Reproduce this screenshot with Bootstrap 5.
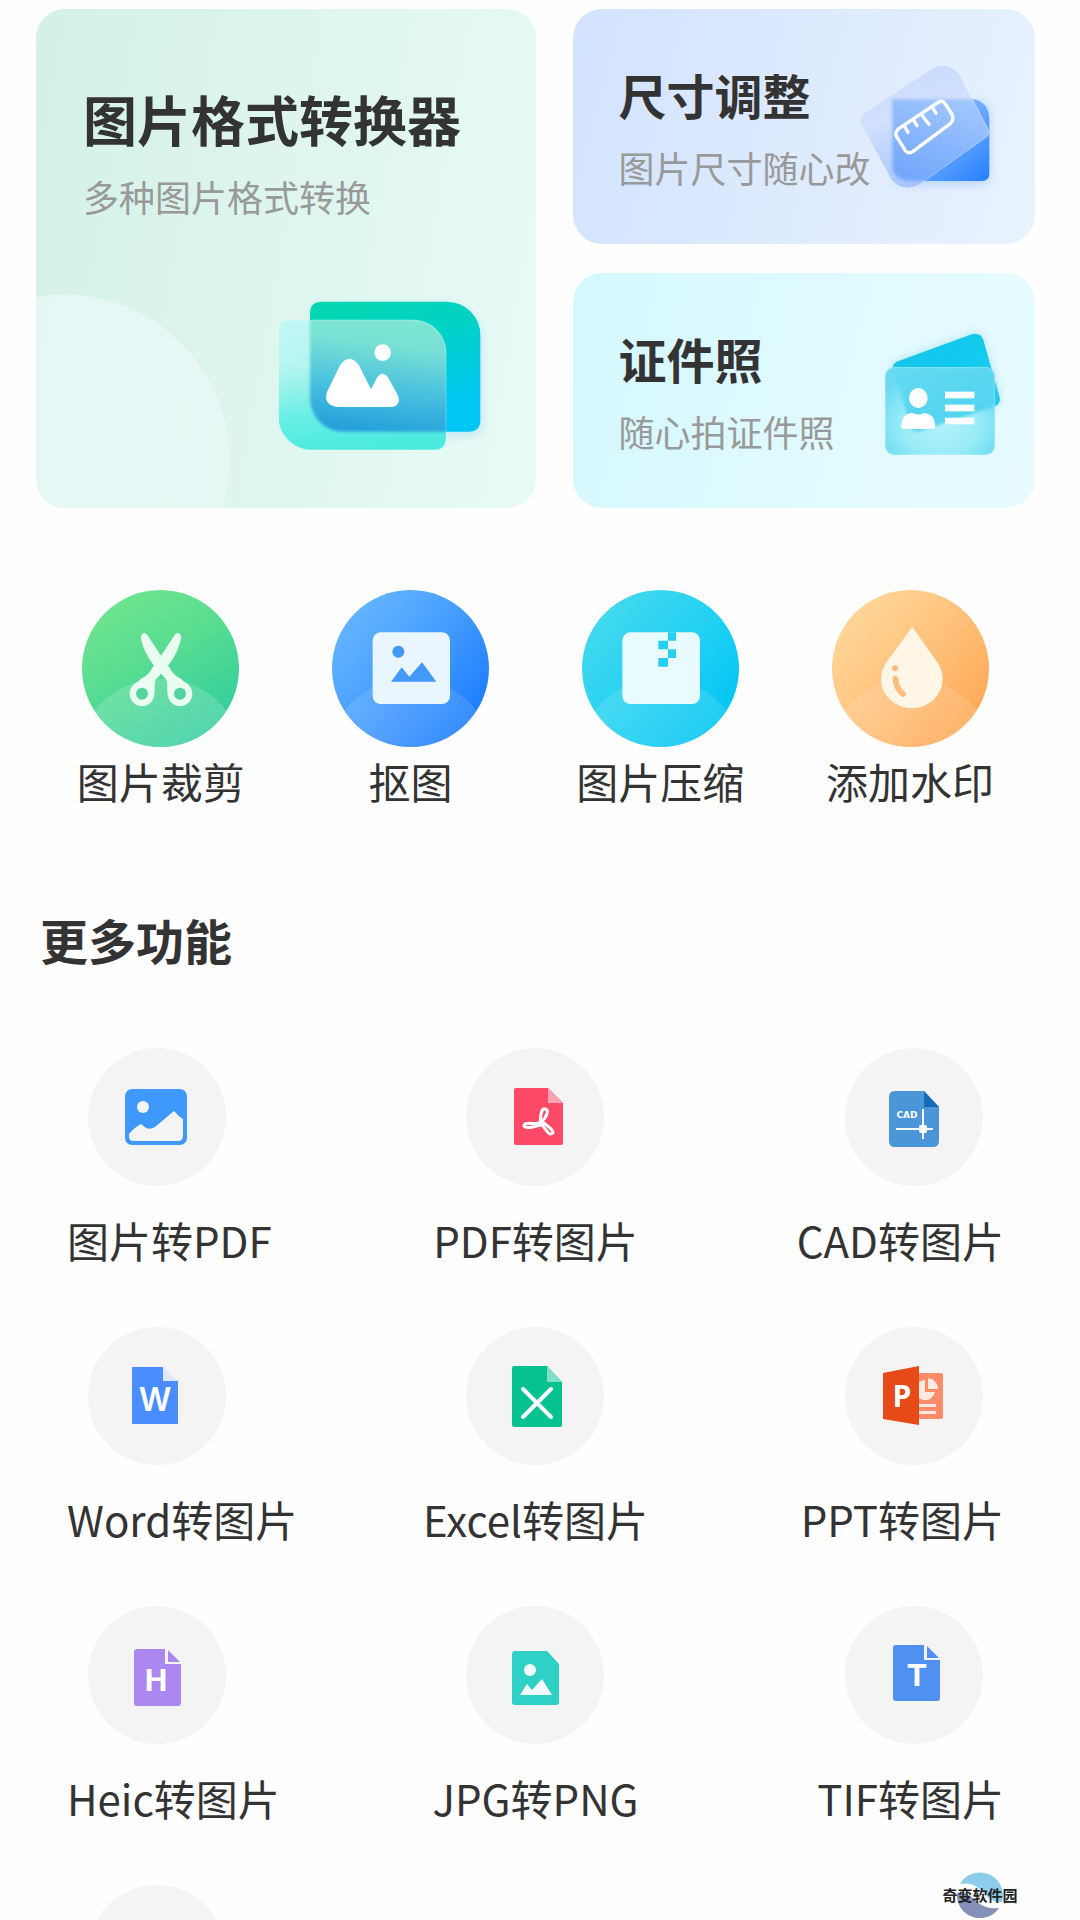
<!DOCTYPE html>
<html lang="zh-CN">
<head>
<meta charset="utf-8">
<meta name="viewport" content="width=device-width, initial-scale=1">
<title>图片格式转换器</title>
<link href="https://cdn.jsdelivr.net/npm/bootstrap@5.3.0/dist/css/bootstrap.min.css" rel="stylesheet">
<style>
  body { background: #fefefe; color: #333; font-family: "Noto Sans CJK SC", sans-serif; }
  a { color: inherit; text-decoration: none; }
  svg { display: block; flex-shrink: 0; }
  .screen { padding: 9px 45px 0 36px; }
  .features { gap: 37px; }
  .feature-stack { gap: 29px; flex: 1 1 0; min-width: 0; }
  .feature { border-radius: 29px; overflow: hidden; }
  .feature-main {
    flex: 0 0 50%;
    padding: 76px 25px 38px 47px;
    background:
      radial-gradient(circle 166px at 28px calc(100% - 48px), rgba(232,248,246,.85) 165px, rgba(232,248,246,0) 166px),
      linear-gradient(100deg, #d4f1e7 0%, #def6ee 50%, #e7fbf6 100%);
  }
  .feature-side { min-height: 235px; padding: 0 15px 0 46px; }
  .feature-size { background: linear-gradient(105deg, #d2e3ff, #dfebfe 55%, #e9f3ff); }
  .feature-id { background: linear-gradient(105deg, #d4f8fd, #e0faff 55%, #e7fbff); }
  .feature-copy { gap: 21px; min-width: 0; }
  .title-lg { font-size: 54px; line-height: 68px; font-weight: 700; }
  .title-md { font-size: 48px; line-height: 60px; font-weight: 700; }
  .hint { font-size: 36px; line-height: 44px; color: #999; }
  .caption { font-size: 42px; line-height: 48px; }
  .tools { margin-top: 82px; }
  .tool { gap: 10px; }
  .section-title { margin: 104px 0 79px 4px; }
  .converters { padding: 0 31px; row-gap: 63px; }
  .converter { gap: 30px; }
  .disc { width: 138px; height: 138px; margin: 0 21px; border-radius: 50%; background: #f4f4f4; }
  .source-mark { right: 60px; bottom: 2px; width: 80px; height: 46px; }
  .source-name { font-size: 15px; line-height: 20px; font-weight: 700; color: #222; }
</style>
<script src="https://cdn.jsdelivr.net/npm/bootstrap@5.3.0/dist/js/bootstrap.bundle.min.js"></script>
</head>
<body>
<main class="screen vh-100 overflow-hidden position-relative">

  <section class="features d-flex">
    <a href="#" class="feature feature-main d-flex flex-column justify-content-between">
      <div class="feature-copy d-flex flex-column text-nowrap">
        <h1 class="title-lg m-0">图片格式转换器</h1>
        <p class="hint m-0">多种图片格式转换</p>
      </div>
      <svg class="align-self-end" width="260" height="190" viewBox="0 0 780 570" aria-hidden="true">
        <defs>
          <linearGradient id="cBack" x1="0" y1="0" x2=".35" y2="1"><stop offset="0" stop-color="#04d8ae"/><stop offset=".45" stop-color="#02d1c8"/><stop offset="1" stop-color="#00c6f6"/></linearGradient>
          <linearGradient id="cFront" x1=".1" y1="0" x2=".25" y2="1"><stop offset="0" stop-color="#c0f7f4"/><stop offset=".35" stop-color="#b6f5ef"/><stop offset=".75" stop-color="#66eee4"/><stop offset="1" stop-color="#4deae0"/></linearGradient>
          <linearGradient id="cMix" x1=".6" y1="0" x2=".45" y2="1"><stop offset="0" stop-color="#80e9d0"/><stop offset=".35" stop-color="#78e0d4"/><stop offset=".7" stop-color="#47bfdf"/><stop offset="1" stop-color="#26a0dc"/></linearGradient>
          <clipPath id="cClip"><path d="M117 120H485A100 100 0 0 1 585 220V475Q585 510 550 510H182A100 100 0 0 1 82 410V155Q82 120 117 120Z"/></clipPath>
          <filter id="blur5" x="-20%" y="-20%" width="140%" height="140%"><feGaussianBlur stdDeviation="5"/></filter>
          <filter id="blur14" x="-20%" y="-20%" width="140%" height="140%"><feGaussianBlur stdDeviation="14"/></filter>
        </defs>
        <path d="M212 65H588A100 100 0 0 1 688 165V420Q688 455 653 455H277A100 100 0 0 1 177 355V100Q177 65 212 65Z" fill="#8fc9f5" opacity=".4" filter="url(#blur14)" transform="translate(4 12)"/>
        <path d="M212 65H588A100 100 0 0 1 688 165V420Q688 455 653 455H277A100 100 0 0 1 177 355V100Q177 65 212 65Z" fill="url(#cBack)"/>
        <g clip-path="url(#cClip)">
          <path d="M82 120H585V510H82Z" fill="url(#cFront)"/>
          <path d="M177 65H688V455H277A100 100 0 0 1 177 355Z" fill="url(#cMix)" filter="url(#blur5)"/>
        </g>
        <path d="M117 120H485A100 100 0 0 1 585 220V475Q585 510 550 510H182A100 100 0 0 1 82 410V155Q82 120 117 120Z" fill="none" stroke="#fff" stroke-opacity=".22" stroke-width="4"/>
        <g fill="#fff"><circle cx="395" cy="218" r="25"/>
        <path d="M268 254Q295 218 323 254L360 328L378 293Q395 270 412 293L440 345Q452 372 425 381H258Q216 374 228 336Z"/></g>
      </svg>
    </a>

    <div class="feature-stack d-flex flex-column">
      <a href="#" class="feature feature-side feature-size d-flex align-items-center">
        <div class="feature-copy d-flex flex-column flex-fill text-nowrap">
          <h2 class="title-md m-0">尺寸调整</h2>
          <p class="hint m-0">图片尺寸随心改</p>
        </div>
        <svg width="165" height="153" viewBox="45 0 495 459" aria-hidden="true">
          <defs>
            <linearGradient id="sBack" x1="0" y1="0" x2="1" y2="1"><stop offset="0" stop-color="#9cc4ff"/><stop offset=".5" stop-color="#6faaff"/><stop offset="1" stop-color="#2380ff"/></linearGradient>
            <linearGradient id="sMix" x1=".8" y1="0" x2=".4" y2="1"><stop offset="0" stop-color="#a3c8fe"/><stop offset="1" stop-color="#74a8fc"/></linearGradient>
            <linearGradient id="sGlass" x1=".3" y1="0" x2=".6" y2="1"><stop offset="0" stop-color="#cadafd"/><stop offset=".4" stop-color="#d0e0fd"/><stop offset="1" stop-color="#9bbffb"/></linearGradient>
            <clipPath id="sClip"><path d="M68 192L278 54Q325 32 358 73L442 233Q454 252 438 262L240 402Q190 430 155 390L64 225Q54 205 68 192Z"/></clipPath>
          </defs>
          <rect x="160" y="155" width="290" height="250" rx="30" fill="#86b7f8" opacity=".45" filter="url(#blur14)"/>
          <path d="M165 145H385Q448 150 448 210V370Q448 393 425 393H195Q158 385 158 345V150Z" fill="url(#sBack)"/>
          <g clip-path="url(#sClip)">
            <rect x="50" y="40" width="410" height="390" fill="url(#sGlass)"/>
            <path d="M157 148H385Q446 150 446 210V392H200Q157 385 157 345Z" fill="url(#sMix)" filter="url(#blur5)"/>
          </g>
          <path d="M68 192L278 54Q325 32 358 73L442 233Q454 252 438 262L240 402Q190 430 155 390L64 225Q54 205 68 192Z" fill="none" stroke="#fff" stroke-opacity=".18" stroke-width="4"/>
          <g fill="none" stroke="#fff" stroke-width="10" stroke-linecap="round" stroke-linejoin="round">
            <path d="M176 236L296 156Q308 150 316 162L337 195Q342 210 332 220L218 305Q206 313 196 302L170 260Q163 247 176 236Z"/>
            <path d="M194 229L204 247M221 211L231 227M245 194L267 223M278 173L288 190"/>
          </g>
        </svg>
      </a>
      <a href="#" class="feature feature-side feature-id d-flex align-items-center">
        <div class="feature-copy d-flex flex-column flex-fill text-nowrap">
          <h2 class="title-md m-0">证件照</h2>
          <p class="hint m-0">随心拍证件照</p>
        </div>
        <svg width="160" height="161" viewBox="0 0 480 483" aria-hidden="true">
          <defs>
            <linearGradient id="iBack" x1="0" y1="0" x2="1" y2="1"><stop offset="0" stop-color="#1bc4e9"/><stop offset=".45" stop-color="#10caee"/><stop offset="1" stop-color="#35ccec"/></linearGradient>
            <radialGradient id="iFront" cx=".5" cy=".65" r=".62"><stop offset="0" stop-color="#b5f2fb"/><stop offset=".55" stop-color="#9aecf8"/><stop offset="1" stop-color="#69daf2"/></radialGradient>
            <linearGradient id="iMix" x1="0" y1="0" x2=".6" y2="1"><stop offset="0" stop-color="#6bdcf2"/><stop offset="1" stop-color="#50d3ef"/></linearGradient>
            <clipPath id="iClip"><rect x="75" y="171" width="330" height="264" rx="28"/></clipPath>
          </defs>
          <path d="M110 155L335 73Q360 65 370 90L419 262Q423 280 407 288L180 364Q158 369 149 345L99 185Q94 162 110 155Z" fill="#68b9d4" opacity=".4" filter="url(#blur14)"/>
          <path d="M110 155L335 73Q360 65 370 90L419 262Q423 280 407 288L180 364Q158 369 149 345L99 185Q94 162 110 155Z" fill="url(#iBack)"/>
          <g clip-path="url(#iClip)">
            <rect x="75" y="171" width="330" height="264" fill="url(#iFront)"/>
            <path d="M94 150L370 90L419 262Q423 280 407 288L180 364Q158 369 149 345Z" fill="url(#iMix)" filter="url(#blur5)"/>
          </g>
          <rect x="77" y="173" width="326" height="260" rx="26" fill="none" stroke="#fff" stroke-opacity=".2" stroke-width="4"/>
          <g fill="#fff"><ellipse cx="175" cy="264" rx="28" ry="30"/><path d="M124 350Q125 309 158 309Q175 318 192 309Q225 312 226 350Q225 357 218 357H132Q124 357 124 350Z"/>
          <rect x="255" y="245" width="88" height="20"/><rect x="255" y="284" width="88" height="20"/><rect x="255" y="323" width="88" height="20"/></g>
        </svg>
      </a>
    </div>
  </section>

  <nav class="tools row row-cols-4 g-0" aria-label="常用工具">
    <a href="#" class="tool d-flex flex-column align-items-center">
      <svg width="157" height="157" viewBox="0 0 471 471" aria-hidden="true">
        <defs>
          <linearGradient id="g1" x1=".2" y1="0" x2=".75" y2="1"><stop offset="0" stop-color="#70e68c"/><stop offset=".45" stop-color="#57dc92"/><stop offset="1" stop-color="#2dcc9e"/></linearGradient>
          <linearGradient id="g2" x1=".15" y1=".1" x2=".9" y2=".75"><stop offset="0" stop-color="#64b5ff"/><stop offset=".5" stop-color="#479eff"/><stop offset="1" stop-color="#2080ff"/></linearGradient>
          <linearGradient id="g3" x1=".15" y1=".1" x2=".9" y2=".75"><stop offset="0" stop-color="#43d8ef"/><stop offset=".5" stop-color="#27d2f2"/><stop offset="1" stop-color="#07c7f3"/></linearGradient>
          <linearGradient id="g4" x1=".15" y1=".1" x2=".9" y2=".75"><stop offset="0" stop-color="#ffd698"/><stop offset=".5" stop-color="#ffc37e"/><stop offset="1" stop-color="#ffac5a"/></linearGradient>
          <clipPath id="round"><circle cx="235.500" cy="235.500" r="235.500"/></clipPath>
          <path id="blade" d="M176 143Q180 122 194 132L248 214L262 232Q275 258 295 265L318 285L262 325Q254 310 256 285Q256 268 246 262L212 222Q184 183 176 143Z"/>
        </defs>
        <g clip-path="url(#round)"><rect width="471" height="471" fill="url(#g1)"/><circle cx="236" cy="520" r="254" fill="#fff" fill-opacity=".17"/></g>
        <g fill="#e9fdf1"><use href="#blade"/><use href="#blade" transform="translate(474 0) scale(-1 1)"/><circle cx="180" cy="311" r="37"/><circle cx="294" cy="311" r="37"/></g>
        <circle cx="180" cy="311" r="18" fill="#58d4a0"/><circle cx="294" cy="311" r="18" fill="#52d2a5"/>
      </svg>
      <span class="caption">图片裁剪</span>
    </a>
    <a href="#" class="tool d-flex flex-column align-items-center">
      <svg width="157" height="157" viewBox="0 0 471 471" aria-hidden="true">
        <g clip-path="url(#round)"><rect width="471" height="471" fill="url(#g2)"/><circle cx="236" cy="520" r="254" fill="#fff" fill-opacity=".12"/></g>
        <rect x="122" y="127" width="232" height="215" rx="24" fill="#eaf6ff"/>
        <g fill="#4299f8"><circle cx="199" cy="185" r="18"/><path d="M177 275L209 232L232 260L270 217L313 275Z"/></g>
      </svg>
      <span class="caption">抠图</span>
    </a>
    <a href="#" class="tool d-flex flex-column align-items-center">
      <svg width="157" height="157" viewBox="0 0 471 471" aria-hidden="true">
        <g clip-path="url(#round)"><rect width="471" height="471" fill="url(#g3)"/><circle cx="236" cy="520" r="254" fill="#fff" fill-opacity=".12"/></g>
        <rect x="121" y="127" width="233" height="215" rx="24" fill="#e8fcff"/>
        <path d="M258 127h24v25h-24zM229 152h29v26h-29zM258 178h24v26h-24zM229 204h29v26h-29z" fill="#27cff0"/>
      </svg>
      <span class="caption">图片压缩</span>
    </a>
    <a href="#" class="tool d-flex flex-column align-items-center">
      <svg width="157" height="157" viewBox="0 0 471 471" aria-hidden="true">
        <g clip-path="url(#round)"><rect width="471" height="471" fill="url(#g4)"/><circle cx="236" cy="520" r="254" fill="#fff" fill-opacity=".13"/></g>
        <path d="M241 111L318 220Q332 242 332 266A92 88 0 0 1 147 266Q147 242 163 217Z" fill="#fff6e8"/>
        <circle cx="189" cy="235" r="9" fill="#fdbd7e"/><path d="M190 266Q193 296 213 312" fill="none" stroke="#fdbd7e" stroke-width="17" stroke-linecap="round"/>
      </svg>
      <span class="caption">添加水印</span>
    </a>
  </nav>

  <h2 class="section-title title-md">更多功能</h2>

  <section class="converters row row-cols-3 g-0">
    <a href="#" class="converter d-flex flex-column align-items-start">
      <svg class="disc" viewBox="0 0 138 138" aria-hidden="true"><rect x="37" y="41" width="62" height="56" rx="7" fill="#3f99fc"/><circle cx="55" cy="59" r="6" fill="#f4f4f4"/><path d="M41 86Q47 79 53 76L58 80Q62 82 67 79L86 63Q90 68 95 71V88Q95 93 90 93H45Q41 93 41 88Z" fill="#f4f4f4"/></svg>
      <span class="caption">图片转PDF</span>
    </a>
    <a href="#" class="converter d-flex flex-column align-items-center">
      <svg class="disc" viewBox="0 0 138 138" aria-hidden="true"><path d="M50 40H82L97 55V95Q97 97 95 97H50Q48 97 48 95V42Q48 40 50 40Z" fill="#ff4a67"/><path d="M82 40L97 55H82Z" fill="#ffa2b0"/><path d="M74 75C75 70 74 62 78 61C84 60 81 69 76 73C79 77 88 81 87 85C83 89 79 80 76 77C71 77 61 82 58 78C58 73 69 77 74 75Z" fill="none" stroke="#fff" stroke-width="3" stroke-linejoin="round"/></svg>
      <span class="caption">PDF转图片</span>
    </a>
    <a href="#" class="converter d-flex flex-column align-items-end">
      <svg class="disc" viewBox="0 0 138 138" aria-hidden="true"><path d="M50 43H79L94 59V93Q94 99 88 99H50Q44 99 44 93V49Q44 43 50 43Z" fill="#4a96d9"/><path d="M79 43L94 59H79Z" fill="#166bb8"/><text x="62" y="70" text-anchor="middle" font-family="DejaVu Sans, sans-serif" font-size="9" font-weight="700" fill="#fff">CAD</text><path d="M51 81H88M78 61V91" stroke="#fff" stroke-width="2"/><rect x="74" y="77" width="8" height="8" rx="2" fill="#fff"/></svg>
      <span class="caption">CAD转图片</span>
    </a>

    <a href="#" class="converter d-flex flex-column align-items-start">
      <svg class="disc" viewBox="0 0 138 138" aria-hidden="true"><path d="M45 40H75V54H90V96Q90 97 89 97H45Q44 97 44 96V41Q44 40 45 40Z" fill="#4a8dff"/><path d="M75 40L90 54H75Z" fill="#dde9fb"/><text x="67" y="84" text-anchor="middle" font-family="Inter, sans-serif" font-size="32" font-weight="600" fill="#fff">W</text></svg>
      <span class="caption">Word转图片</span>
    </a>
    <a href="#" class="converter d-flex flex-column align-items-center">
      <svg class="disc" viewBox="0 0 138 138" aria-hidden="true"><path d="M48 39H81L96 55V98Q96 100 94 100H48Q46 100 46 98V41Q46 39 48 39Z" fill="#06c290"/><path d="M81 39L96 55H81Z" fill="#82dfc6"/><path d="M57 62L85 90M85 62L57 90" stroke="#fff" stroke-width="4" stroke-linecap="round"/></svg>
      <span class="caption">Excel转图片</span>
    </a>
    <a href="#" class="converter d-flex flex-column align-items-end">
      <svg class="disc" viewBox="0 0 138 138" aria-hidden="true"><rect x="70" y="46" width="28" height="46" rx="2" fill="#ff8c69"/><g fill="#ffeae2"><path d="M80 53A10 10 0 1 0 90 65H80Z"/><path d="M83 51A11 11 0 0 1 93 62H83Z"/><path d="M74 77H91V80H74ZM74 84H91V87H74Z"/></g><path d="M38 46L74 39V98L38 92Z" fill="#e64a19"/><text x="57" y="80" text-anchor="middle" font-family="Open Sans, sans-serif" font-size="30" font-weight="700" fill="#fff">P</text></svg>
      <span class="caption">PPT转图片</span>
    </a>

    <a href="#" class="converter d-flex flex-column align-items-start">
      <svg class="disc" viewBox="0 0 138 138" aria-hidden="true"><path d="M49 43H77V58H93V97Q93 100 90 100H49Q46 100 46 97V46Q46 43 49 43Z" fill="#ab87ef"/><path d="M80 44L92 56H80Z" fill="#ab87ef"/><text x="68" y="85" text-anchor="middle" font-family="Roboto, sans-serif" font-size="32" font-weight="700" fill="#fff">H</text></svg>
      <span class="caption">Heic转图片</span>
    </a>
    <a href="#" class="converter d-flex flex-column align-items-center">
      <svg class="disc" viewBox="0 0 138 138" aria-hidden="true"><path d="M49 45H81L93 58V96Q93 99 90 99H49Q46 99 46 96V48Q46 45 49 45Z" fill="#2fd1c6"/><g fill="#f4fbfa"><circle cx="64" cy="64" r="6"/><path d="M54 89L61 78L66 84L76 73L86 89Z"/></g></svg>
      <span class="caption">JPG转PNG</span>
    </a>
    <a href="#" class="converter d-flex flex-column align-items-end">
      <svg class="disc" viewBox="0 0 138 138" aria-hidden="true"><path d="M51 39H79V54H95V92Q95 95 92 95H51Q48 95 48 92V42Q48 39 51 39Z" fill="#4f90f0"/><path d="M82 40L94 52H82Z" fill="#4f90f0"/><text x="72" y="80" text-anchor="middle" font-family="Roboto, sans-serif" font-size="32" font-weight="700" fill="#fff">T</text></svg>
      <span class="caption">TIF转图片</span>
    </a>

    <a href="#" class="converter d-flex flex-column align-items-start" aria-label="更多">
      <span class="disc"></span>
    </a>
  </section>

  <div class="source-mark position-absolute d-flex align-items-center justify-content-center">
    <svg class="position-absolute" width="46" height="46" viewBox="0 0 46 46" aria-hidden="true">
      <path d="M3 12A23 23 0 0 1 45 30C37 31 32 27 26 20C20 13 12 10 3 12Z" fill="#8bcdea"/>
      <path d="M0 21C8 20 13 23 18 28C25 35 33 37 42 36A23 23 0 0 1 0 21Z" fill="#8590b9"/>
    </svg>
    <span class="source-name position-relative text-nowrap">奇变软件园</span>
  </div>
</main>
</body>
</html>
